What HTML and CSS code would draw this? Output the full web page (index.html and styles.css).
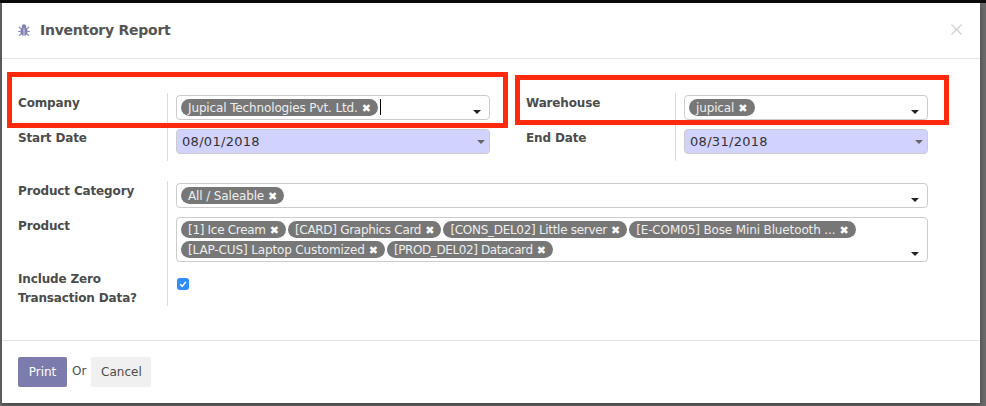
FILE: index.html
```html
<!DOCTYPE html>
<html lang="en">
<head>
    <meta charset="UTF-8">
    <meta name="viewport" content="width=device-width, initial-scale=1.0">
    <title>Inventory Report</title>
    <link rel="stylesheet" href="styles.css">
</head>
<body>
    <div class="modal">
        <header class="modal-header">
            <svg class="bug-icon" viewBox="0 0 12 12" width="12" height="12">
                <ellipse cx="6" cy="7.3" rx="3.6" ry="4.4" fill="#8181b3"/>
                <circle cx="6" cy="2.4" r="2.2" fill="#8181b3"/>
                <path d="M6 4.5v7.5" stroke="#fff" stroke-width=".7"/>
                <path d="M2.8 4.5 1 3M2.6 7.5H.2M2.8 10 1 11.6M9.2 4.5 11 3M9.4 7.5h2.4M9.2 10l1.8 1.6" stroke="#8181b3" stroke-width="1.1" fill="none"/>
            </svg>
            <h4 class="modal-title">Inventory Report</h4>
            <svg class="close-icon" viewBox="0 0 11 11" width="11" height="11">
                <path d="M.5.5l10 10M10.5.5l-10 10" stroke="#d0d0d0" stroke-width="1.2" fill="none"/>
            </svg>
        </header>

        <form class="modal-body">
            <div class="group group-top">
                <label class="label">Company</label>
                <div class="cell">
                    <div class="field">
                        <div class="tags">
                            <span class="tag">Jupical Technologies Pvt. Ltd.<i class="tag-x">&#10006;</i></span>
                            <span class="text-cursor"></span>
                        </div>
                        <span class="caret"></span>
                    </div>
                </div>
                <label class="label label-right">Warehouse</label>
                <div class="cell">
                    <div class="field">
                        <div class="tags">
                            <span class="tag">jupical<i class="tag-x">&#10006;</i></span>
                        </div>
                        <span class="caret"></span>
                    </div>
                </div>
                <label class="label label-date">Start Date</label>
                <div class="cell">
                    <div class="field field-date">
                        <span class="date-value">08/01/2018</span>
                        <span class="caret caret-grey"></span>
                    </div>
                </div>
                <label class="label label-right label-date">End Date</label>
                <div class="cell">
                    <div class="field field-date">
                        <span class="date-value">08/31/2018</span>
                        <span class="caret caret-grey"></span>
                    </div>
                </div>
            </div>

            <div class="group group-bottom">
                <label class="label">Product Category</label>
                <div class="cell">
                    <div class="field">
                        <div class="tags">
                            <span class="tag">All / Saleable<i class="tag-x">&#10006;</i></span>
                        </div>
                        <span class="caret"></span>
                    </div>
                </div>
                <label class="label label-product">Product</label>
                <div class="cell">
                    <div class="field">
                        <div class="tags">
                            <span class="tag tag-narrow">[1] Ice Cream<i class="tag-x">&#10006;</i></span>
                            <span class="tag tag-narrow">[CARD] Graphics Card<i class="tag-x">&#10006;</i></span>
                            <span class="tag tag-narrow">[CONS_DEL02] Little server<i class="tag-x">&#10006;</i></span>
                            <span class="tag">[E-COM05] Bose Mini Bluetooth ...<i class="tag-x">&#10006;</i></span>
                            <span class="tag">[LAP-CUS] Laptop Customized<i class="tag-x">&#10006;</i></span>
                            <span class="tag tag-narrower">[PROD_DEL02] Datacard<i class="tag-x">&#10006;</i></span>
                        </div>
                        <span class="caret"></span>
                    </div>
                </div>
                <label class="label label-zero">Include Zero Transaction Data?</label>
                <div class="cell cell-check">
                    <span class="checkbox">
                        <svg viewBox="0 0 12 12" width="12" height="12">
                            <path d="M3.2 6.3l2 2 3.6-4.4" stroke="#fff" stroke-width="1.5" fill="none"/>
                        </svg>
                    </span>
                </div>
            </div>
        </form>

        <footer class="modal-footer">
            <button type="button" class="btn btn-print">Print</button>
            <span class="or">Or</span>
            <button type="button" class="btn btn-cancel">Cancel</button>
        </footer>
    </div>

    <!-- red highlight boxes drawn over the form -->
    <div class="highlight highlight-company"></div>
    <div class="highlight highlight-warehouse"></div>
</body>
</html>
```

FILE: styles.css
```css
body, html {
    margin: 0;
    padding: 0;
    height: 100%;
    overflow: hidden;
    font-family: 'DejaVu Sans', sans-serif;
    font-size: 12px;
    background-color: #6a6a6a;
}
body {
    position: relative;
    border-top: 3px solid #0a0a0a;
    box-sizing: border-box;
    padding-left: 2px;
}
.modal {
    width: 978px;
    height: 400px;
    background-color: white;
    box-shadow: 0 2px 5px rgba(0, 0, 0, 0.4);
    display: flex;
    flex-direction: column;
}
.modal-header {
    height: 56px;
    box-sizing: border-box;
    border-bottom: 1px solid #e5e5e5;
    padding: 0 18px 2px 16px;
    display: flex;
    align-items: center;
}
.bug-icon {
    margin-right: 10px;
}
.modal-title {
    margin: 0;
    font-size: 14px;
    font-weight: bold;
    letter-spacing: -.25px;
    color: #555;
    flex: 1;
}
.modal-body {
    padding: 34px 52px 0 16px;
    flex: 1;
}
.group {
    display: grid;
}
.group-top {
    grid-template-columns: 149px 323px 185px 253px;
    margin-bottom: 20px;
}
.group-bottom {
    grid-template-columns: 149px 761px;
}
.label {
    font-weight: bold;
    letter-spacing: -.15px;
    color: #4c4c4c;
    line-height: 19px;
    padding-top: 1px;
}
.label-right {
    margin-left: 36px;
}
.label-date {
    padding-top: 2px;
}
.label-product {
    padding-top: 2px;
}
.label-zero {
    padding-top: 1px;
    margin-bottom: -2px;
    width: 125px;
}
.cell {
    border-left: 1px solid #ddd;
    padding: 2px 0 7px 8px;
}
.cell-check {
    padding: 9px 0 16px 9px;
}
.field {
    box-sizing: border-box;
    min-height: 25px;
    border: 1px solid #ccc;
    border-radius: 4px;
    padding: 3px 8px 3px 4px;
    display: flex;
    align-items: flex-end;
    justify-content: space-between;
}
.field-date {
    background-color: #d2d2ff;
    align-items: center;
    padding-right: 4px;
    color: #333;
    font-size: 13px;
    letter-spacing: .3px;
}
.date-value {
    padding-left: 1px;
}
.tags {
    display: flex;
    flex-wrap: wrap;
    align-items: center;
    gap: 3px 2px;
    flex: 1;
}
.tag {
    height: 17px;
    line-height: 18px;
    padding: 0 7px;
    border-radius: 9px;
    background-color: #777;
    color: #eee;
    letter-spacing: -.13px;
    white-space: nowrap;
}
.tag-narrow {
    letter-spacing: -.3px;
}
.tag-narrower {
    letter-spacing: -.4px;
}
.tag-x {
    font-style: normal;
    font-size: 11px;
    letter-spacing: 0;
    color: white;
    margin-left: 4px;
}
.text-cursor {
    width: 1px;
    height: 16px;
    margin-top: -1px;
    background-color: black;
}
.caret {
    width: 0;
    height: 0;
    margin-bottom: 2px;
    border-left: 4px solid transparent;
    border-right: 4px solid transparent;
    border-top: 4px solid #222;
}
.caret-grey {
    margin-bottom: 0;
    border-top-color: #666;
}
.checkbox {
    display: block;
    width: 12px;
    height: 12px;
    border-radius: 3px;
    background-color: #2f8efb;
}
.checkbox svg {
    display: block;
}
.modal-footer {
    height: 63px;
    box-sizing: border-box;
    border-top: 1px solid #e5e5e5;
    padding: 16px 16px 0;
    display: flex;
    align-items: flex-start;
}
.btn {
    height: 30px;
    border: none;
    border-radius: 2px;
    font-family: inherit;
    font-size: 12px;
    padding: 0;
}
.btn-print {
    width: 49px;
    background-color: #7c7bad;
    color: white;
}
.btn-cancel {
    width: 60px;
    background-color: #f0f0f0;
    color: #4c4c4c;
}
.or {
    margin: 7px 5px 0;
    color: #4c4c4c;
}
.highlight {
    position: absolute;
    box-sizing: border-box;
    border: 5px solid #ff2a0d;
}
.highlight-company {
    left: 7px;
    top: 69px;
    width: 501px;
    height: 56px;
}
.highlight-warehouse {
    left: 515px;
    top: 72px;
    width: 434px;
    height: 50px;
}
```
